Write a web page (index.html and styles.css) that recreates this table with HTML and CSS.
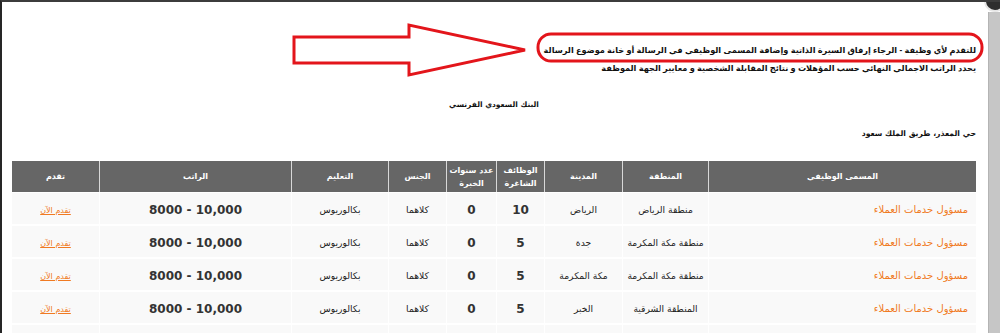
FILE: index.html
```html
<!DOCTYPE html>
<html lang="ar">
<head>
<meta charset="utf-8">
<link rel="stylesheet" href="styles.css">
</head>
<body>
<div class="window">
  <div class="page">
    <svg class="annot" width="1000" height="90" viewBox="0 0 1000 90">
      <rect x="538" y="34" width="444" height="27" rx="13" ry="13" fill="none" stroke="#e3151b" stroke-width="3"/>
      <polygon points="294,37 409,37 409,25 525,50 409,75 409,63 294,63" fill="none" stroke="#e3151b" stroke-width="3" stroke-linejoin="miter"/>
    </svg>
    <div class="notice">
      <p class="line">للتقدم لأي وظيفة - الرجاء إرفاق السيرة الذاتية وإضافة المسمى الوظيفي في الرسالة أو خانة موضوع الرسالة</p>
      <p class="line">يحدد الراتب الاجمالي النهائي حسب المؤهلات و نتائج المقابلة الشخصية و معايير الجهة الموظفة</p>
    </div>
    <p class="bank">البنك السعودي الفرنسي</p>
    <p class="address">حي المعذر، طريق الملك سعود</p>
    <table class="jobs">
      <colgroup>
        <col class="c-title"><col class="c-region"><col class="c-city"><col class="c-vac"><col class="c-exp"><col class="c-gender"><col class="c-edu"><col class="c-salary"><col class="c-apply">
      </colgroup>
      <thead>
        <tr>
          <th>المسمى الوظيفي</th>
          <th>المنطقة</th>
          <th>المدينة</th>
          <th>الوظائف<br>الشاغرة</th>
          <th>عدد سنوات<br>الخبرة</th>
          <th>الجنس</th>
          <th>التعليم</th>
          <th>الراتب</th>
          <th>تقدم</th>
        </tr>
      </thead>
      <tbody>
        <tr>
          <td class="title">مسؤول خدمات العملاء</td>
          <td>منطقة الرياض</td>
          <td>الرياض</td>
          <td class="num">10</td>
          <td class="num">0</td>
          <td>كلاهما</td>
          <td>بكالوريوس</td>
          <td class="num">10,000 - 8000</td>
          <td><a class="apply" href="#">تقدم الآن</a></td>
        </tr>
        <tr>
          <td class="title">مسؤول خدمات العملاء</td>
          <td>منطقة مكة المكرمة</td>
          <td>جدة</td>
          <td class="num">5</td>
          <td class="num">0</td>
          <td>كلاهما</td>
          <td>بكالوريوس</td>
          <td class="num">10,000 - 8000</td>
          <td><a class="apply" href="#">تقدم الآن</a></td>
        </tr>
        <tr>
          <td class="title">مسؤول خدمات العملاء</td>
          <td>منطقة مكة المكرمة</td>
          <td>مكة المكرمة</td>
          <td class="num">5</td>
          <td class="num">0</td>
          <td>كلاهما</td>
          <td>بكالوريوس</td>
          <td class="num">10,000 - 8000</td>
          <td><a class="apply" href="#">تقدم الآن</a></td>
        </tr>
        <tr>
          <td class="title">مسؤول خدمات العملاء</td>
          <td>المنطقة الشرقية</td>
          <td>الخبر</td>
          <td class="num">5</td>
          <td class="num">0</td>
          <td>كلاهما</td>
          <td>بكالوريوس</td>
          <td class="num">10,000 - 8000</td>
          <td><a class="apply" href="#">تقدم الآن</a></td>
        </tr>
        <tr>
          <td class="title">مسؤول خدمات العملاء</td>
          <td>المنطقة الشرقية</td>
          <td>الدمام</td>
          <td class="num">5</td>
          <td class="num">0</td>
          <td>كلاهما</td>
          <td>بكالوريوس</td>
          <td class="num">10,000 - 8000</td>
          <td><a class="apply" href="#">تقدم الآن</a></td>
        </tr>
      </tbody>
    </table>
  </div>
  <div class="scrollbar"></div>
  <div class="close-btn"></div>
</div>
</body>
</html>
```

FILE: styles.css
```css
html, body {
  margin: 0;
  padding: 0;
  background: #fff;
  overflow: hidden;
}
body {
  font-family: "DejaVu Sans", "Liberation Sans", sans-serif;
  color: #111;
}
.window {
  position: relative;
  display: flex;
  height: 333px;
  border-top: 2px solid #3c3c3c;
  border-left: 2px solid #262626;
  box-sizing: border-box;
  overflow: hidden;
}
.page {
  position: relative;
  flex: 1;
  padding: 0 12px 0 10px;
  direction: rtl;
}
.annot {
  position: absolute;
  left: -2px;
  top: -2px;
  pointer-events: none;
}
.notice {
  margin-top: 40px;
  font-family: "Liberation Sans", "DejaVu Sans", sans-serif;
  font-weight: bold;
  font-size: 8.2px;
  text-align: right;
}
.line {
  margin: 0;
  line-height: 18px;
  height: 18px;
  white-space: nowrap;
}
.bank {
  margin: 19px 0 0;
  text-align: center;
  font-weight: bold;
  font-size: 7.5px;
  line-height: 16px;
}
.address {
  margin: 13px 0 0;
  text-align: right;
  font-weight: bold;
  font-size: 7.7px;
  line-height: 16px;
}
.jobs {
  margin-top: 19px;
  width: 964px;
  border-collapse: separate;
  border-spacing: 0;
  table-layout: fixed;
}
.c-title { width: 268px; }
.c-region { width: 86px; }
.c-city { width: 78px; }
.c-vac { width: 48px; }
.c-exp { width: 50px; }
.c-gender { width: 58px; }
.c-edu { width: 97px; }
.c-salary { width: 192px; }
.c-apply { width: 87px; }
.jobs th {
  background: #666;
  color: #fff;
  font-size: 8px;
  font-weight: bold;
  height: 31px;
  padding: 0;
  line-height: 13px;
  white-space: nowrap;
  border-left: 1px solid #d8d8d8;
  box-sizing: border-box;
}
.jobs th:last-child { border-left: none; }
.jobs td {
  background: #f9f9f9;
  height: 33px;
  padding: 2px 2px 0;
  text-align: center;
  font-size: 9.2px;
  color: #222;
  white-space: nowrap;
  border-left: 1px solid #fff;
  border-top: 1px solid #fff;
  border-bottom: 1px solid #fff;
  box-sizing: border-box;
}
.jobs td:last-child { border-left: none; }
.jobs td.title {
  text-align: right;
  padding-right: 8px;
  color: #f07a22;
  font-size: 10px;
}
.jobs td.num {
  font-weight: bold;
  font-size: 12px;
  color: #333;
}
.apply {
  color: #f07a22;
  font-size: 8px;
  text-decoration: underline;
}
.scrollbar {
  width: 11px;
  margin-top: 10px;
  background: #c6c6c6;
  border-left: 1px solid #b4b4b4;
}
.close-btn {
  position: absolute;
  right: -6px;
  top: -12px;
  width: 18px;
  height: 18px;
  border-radius: 50%;
  background: #2e2e2e;
  border: 2px solid #e6e6e6;
}
```
